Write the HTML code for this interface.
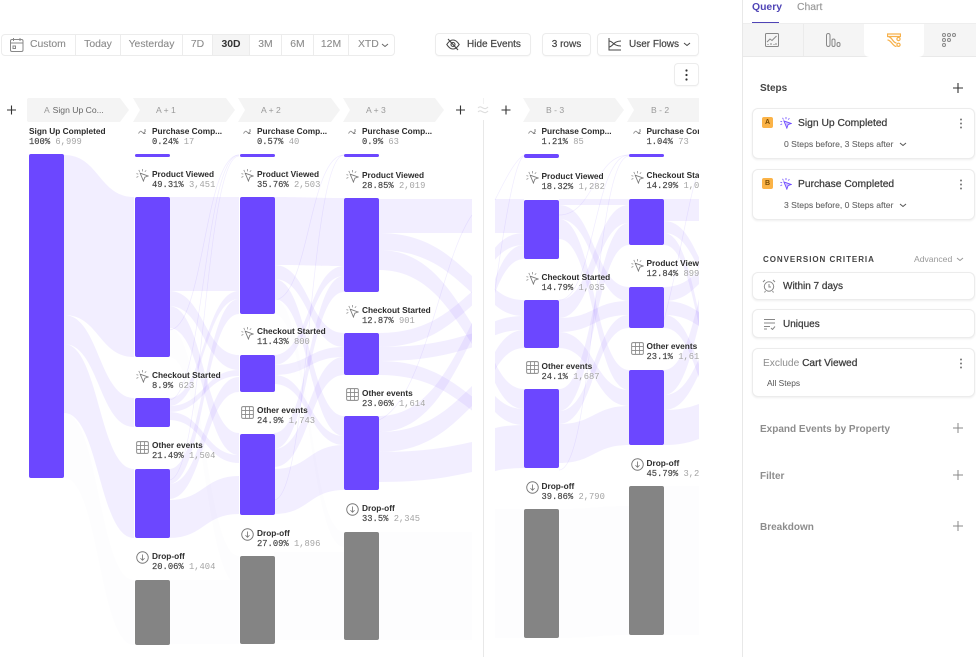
<!DOCTYPE html>
<html><head><meta charset="utf-8"><style>
html,body{margin:0;padding:0;background:#fff}
body{width:976px;height:657px;position:relative;overflow:hidden;font-family:"Liberation Sans",sans-serif;color:#333}
.a{position:absolute}
#wrap{position:absolute;left:0;top:0;width:976px;height:657px;filter:blur(.35px)}
.seg{position:absolute;top:34px;height:22px;line-height:21px;text-align:center;font-size:10.400px;color:#8b8b8b;border-right:1px solid #ececec;box-sizing:border-box;-webkit-text-stroke:.1px #8b8b8b}
.btn{position:absolute;border:1px solid #ececec;border-radius:4px;box-sizing:border-box;background:#fff;font-size:10px;color:#444;line-height:21px;box-shadow:0 1px 1px rgba(0,0,0,.03);-webkit-text-stroke:.2px #444}
.bar{position:absolute;width:35px;background:#6c47ff;border-radius:2px}
.g{background:#848484}
.ln{position:absolute;width:35px;height:3px;background:#6c47ff;border-radius:2px;top:154px}
.l{position:absolute;white-space:nowrap;width:140px;height:24px;text-shadow:0 0 2px #fff}
.l b{display:block;font-size:8.300px;line-height:12px;color:#2c2c2c}
.l span{display:block;font-family:"Liberation Mono",monospace;font-size:8.800px;line-height:11px;color:#444;-webkit-text-stroke:.15px #444}
.l i{font-style:normal;color:#a4a4a4;-webkit-text-stroke:0}
.hd{position:absolute;top:98px;height:24px;line-height:24px;font-size:8.600px;color:#999}
.card{position:absolute;left:752px;width:223px;box-sizing:border-box;border:1px solid #ececec;border-radius:6px;background:#fff;box-shadow:0 1px 2px rgba(0,0,0,.07)}
.t{position:absolute;white-space:nowrap}
.m{-webkit-text-stroke:.25px #3c3c3c;color:#3c3c3c!important}
.bd{position:absolute;left:762px;width:11px;height:11px;background:#fbb347;border-radius:2px;font-size:7px;font-weight:bold;line-height:11px;text-align:center;color:#7a4b00}
.sub{font-size:8.600px;color:#666;left:784px;-webkit-text-stroke:.1px #666}
.sec{left:760px;font-size:10px;font-weight:bold;color:#8d8d8d}
</style></head><body>
<div id="wrap">
<svg width="0" height="0" style="position:absolute"><defs>
<symbol id="sp" viewBox="0 0 14 14"><path d="M3 1l1 2M7 0v2.500M.5 5l2 .6M.5 9l2-1M11 1.500l-1.500 1.500" stroke="#888" stroke-width=".8" fill="none"/><path d="M4.500 4.500l8.500 3-3.500 1.300L8 13z" stroke="#777" stroke-width=".9" fill="#fff"/></symbol>
<symbol id="sv" viewBox="0 0 14 14"><path d="M3 1l1 2M7 0v2.500M.5 5l2 .6M.5 9l2-1M11 1.500l-1.500 1.500" stroke="#7a5cff" stroke-width="1" fill="none"/><path d="M4.500 4.500l8.500 3-3.500 1.300L8 13z" stroke="#6c47ff" stroke-width="1" fill="#cfc4ff"/></symbol>
<symbol id="gr" viewBox="0 0 14 14"><rect x=".7" y=".7" width="12.600" height="12.600" rx="1.500" fill="#fff" stroke="#888" stroke-width="1"/><path d="M.7 4.900h12.600M.7 9.100h12.600M4.900.7v12.600M9.100.7v12.600" stroke="#888" stroke-width=".9"/></symbol>
<symbol id="dr" viewBox="0 0 14 14"><circle cx="7" cy="7" r="6.200" fill="#fff" stroke="#777" stroke-width="1"/><path d="M7 3.800v6M4.800 7.800L7 10l2.200-2.200" fill="none" stroke="#777" stroke-width=".9"/></symbol>
<symbol id="pu" viewBox="0 0 8 6"><path d="M.5 4.500C2 2 3 1.500 4 3s2 1.500 3.500-1M6 1h2M5 4.500h2.500" fill="none" stroke="#888" stroke-width=".9"/></symbol>
</defs></svg>

<!-- flows -->
<svg class="a" style="left:0;top:0" width="699" height="657" fill="none">
<defs><clipPath id="c1"><rect x="379" y="0" width="93" height="657"/></clipPath><clipPath id="c2"><rect x="495" y="0" width="29" height="657"/></clipPath></defs>
<g fill="#fdfdfe">
<path d="M64 413C99 413 99 580 134 580V645C99 645 99 478 64 478Z"/>
<rect x="169" y="580" width="70" height="64"/>
<path d="M169 328C204 328 204 556 239 556V585C204 585 204 357 169 357Z"/>
<path d="M274 552H344V640H274Z"/>
<path d="M274 299C309 299 309 532 344 532V547C309 547 309 314 274 314Z"/>
<rect x="379" y="532" width="93" height="108"/>
<rect x="495" y="509" width="29" height="129"/>
<path d="M559 509C594 509 594 506 629 506V635C594 635 594 638 559 638Z"/>
<rect x="664" y="486" width="35" height="149"/>
</g>
<g fill="#6c47ff" fill-opacity=".09">
<path d="M64 155C99 155 99 197 134 197V357C99 357 99 315 64 315Z"/>
<path d="M64 315C99 315 99 398 134 398V427C99 427 99 344 64 344Z"/>
<path d="M64 344C99 344 99 469 134 469V538C99 538 99 413 64 413Z"/>

<rect x="169" y="197" width="70" height="94"/>
<path d="M169 291C204 291 204 355 239 355V370C204 370 204 306 169 306Z"/>
<path d="M169 306C204 306 204 433 239 433V455C204 455 204 328 169 328Z"/>
<path d="M169 398C204 398 204 291 239 291V299C204 299 204 406 169 406Z"/>
<path d="M169 406C204 406 204 370 239 370V376C204 376 204 412 169 412Z"/>
<path d="M169 412C204 412 204 455 239 455V463C204 463 204 420 169 420Z"/>
<path d="M169 469C204 469 204 299 239 299V314C204 314 204 484 169 484Z"/>
<path d="M169 484C204 484 204 377 239 377V392C204 392 204 499 169 499Z"/>
<path d="M169 500C204 500 204 476 239 476V514C204 514 204 538 169 538Z"/>

<path d="M274 197C309 197 309 198 344 198V266C309 266 309 265 274 265Z"/>
<path d="M274 265C309 265 309 333 344 333V347C309 347 309 279 274 279Z"/>
<path d="M274 279C309 279 309 416 344 416V436C309 436 309 299 274 299Z"/>
<path d="M274 355C309 355 309 266 344 266V276C309 276 309 365 274 365Z"/>
<path d="M274 365C309 365 309 347 344 347V357C309 357 309 375 274 375Z"/>
<path d="M274 375C309 375 309 436 344 436V445C309 445 309 384 274 384Z"/>
<path d="M274 433C309 433 309 276 344 276V292C309 292 309 449 274 449Z"/>
<path d="M274 449C309 449 309 357 344 357V375C309 375 309 467 274 467Z"/>
<path d="M274 469C309 469 309 445 344 445V490C309 490 309 514 274 514Z"/>

<g clip-path="url(#c1)">
<rect x="379" y="199" width="93" height="34"/>
<path d="M379 233C472 233 472 319 565 319V336C472 336 472 250 379 250Z"/>
<path d="M379 250C472 250 472 398 565 398V418C472 418 472 270 379 270Z"/>
<path d="M379 333C472 333 472 250 565 250V264C472 264 472 347 379 347Z"/>
<path d="M379 347C472 347 472 320 565 320V334C472 334 472 361 379 361Z"/>
<path d="M379 361C472 361 472 432 565 432V446C472 446 472 375 379 375Z"/>
<path d="M379 416C472 416 472 230 565 230V246C472 246 472 432 379 432Z"/>
<path d="M379 432C472 432 472 340 565 340V360C472 360 472 452 379 452Z"/>
<path d="M379 452C472 452 472 432 565 432V462C472 462 472 482 379 482Z"/>
</g>
<g clip-path="url(#c2)">
<rect x="495" y="199" width="29" height="34"/>
<path d="M440 300C482 300 482 233 524 233V245C482 245 482 312 440 312Z"/>
<path d="M440 400C482 400 482 245 524 245V259C482 259 482 414 440 414Z"/>
<path d="M440 250C482 250 482 300 524 300V316C482 316 482 266 440 266Z"/>
<path d="M440 340C482 340 482 316 524 316V330C482 330 482 354 440 354Z"/>
<path d="M440 430C482 430 482 330 524 330V348C482 348 482 448 440 448Z"/>
<path d="M440 270C482 270 482 389 524 389V409C482 409 482 290 440 290Z"/>
<path d="M440 350C482 350 482 409 524 409V425C482 425 482 366 440 366Z"/>
<path d="M440 439C482 439 482 425 524 425V468C482 468 482 482 440 482Z"/>
</g>

<rect x="559" y="199" width="70" height="6"/>
<path d="M559 205C594 205 594 287 629 287V301C594 301 594 219 559 219Z"/>
<path d="M559 219C594 219 594 370 629 370V390C594 390 594 239 559 239Z"/>
<path d="M559 300C594 300 594 205 629 205V223C594 223 594 318 559 318Z"/>
<path d="M559 318C594 318 594 301 629 301V315C594 315 594 332 559 332Z"/>
<path d="M559 332C594 332 594 390 629 390V406C594 406 594 348 559 348Z"/>
<path d="M559 389C594 389 594 223 629 223V245C594 245 594 411 559 411Z"/>
<path d="M559 411C594 411 594 315 629 315V328C594 328 594 424 559 424Z"/>
<path d="M559 424C594 424 594 406 629 406V445C594 445 594 463 559 463Z"/>

<rect x="664" y="199" width="35" height="22"/>
<path d="M664 221C699 221 699 294 734 294V306C699 306 699 233 664 233Z"/>
<path d="M664 233C699 233 699 394 734 394V406C699 406 699 245 664 245Z"/>
<path d="M664 287C699 287 699 253 734 253V267C699 267 699 301 664 301Z"/>
<path d="M664 301C699 301 699 323 734 323V337C699 337 699 315 664 315Z"/>
<path d="M664 315C699 315 699 414 734 414V427C699 427 699 328 664 328Z"/>
<path d="M664 370C699 370 699 228 734 228V253C699 253 699 395 664 395Z"/>
<path d="M664 395C699 395 699 323 734 323V338C699 338 699 410 664 410Z"/>
<path d="M664 410C699 410 699 398 734 398V433C699 433 699 445 664 445Z"/>
</g>
<g stroke="#6c47ff" stroke-opacity=".1" stroke-width=".7">
<path d="M169 400C204 400 204 155 239 155"/><path d="M169 330C204 330 204 155 239 155"/><path d="M169 480C204 480 204 156 239 156"/>
<path d="M274 500C309 500 309 155 344 155"/><path d="M274 300C309 300 309 155 344 155"/>
<path d="M379 420C425 400 440 260 472 215"/>
<path d="M495 200C505 180 515 160 524 155"/><path d="M495 290C505 220 515 160 524 156"/>
<path d="M559 300C594 300 594 155 629 155"/><path d="M559 215C594 215 594 155 629 155"/><path d="M559 470C594 470 594 156 629 156"/>
<path d="M664 320C680 260 690 190 699 170"/>
</g>
</svg>

<!-- toolbar -->
<div class="a" style="left:1px;top:34px;width:394px;height:22px;border:1px solid #ececec;border-radius:4px;box-sizing:border-box"></div>
<div class="a" style="left:212px;top:35px;width:38px;height:20px;background:#f5f5f5"></div>
<div class="seg" style="left:1px;width:75px;text-align:left;padding-left:29px">Custom</div>
<svg class="a" style="left:10px;top:38px" width="14" height="14" fill="none" stroke="#888" stroke-width="1"><rect x=".5" y="1.500" width="12.500" height="12" rx="1.500"/><path d="M.5 5h12.500M3.500 0v3M10 0v3"/><rect x="3" y="8" width="2.500" height="2.500"/></svg>
<div class="seg" style="left:76px;width:45px">Today</div>
<div class="seg" style="left:121px;width:62px">Yesterday</div>
<div class="seg" style="left:183px;width:30px">7D</div>
<div class="seg" style="left:213px;width:37px;color:#333;font-weight:bold;-webkit-text-stroke:0">30D</div>
<div class="seg" style="left:250px;width:32px">3M</div>
<div class="seg" style="left:282px;width:32px">6M</div>
<div class="seg" style="left:314px;width:35px">12M</div>
<div class="seg" style="left:349px;width:46px;border:0;text-align:left;padding-left:9px">XTD</div>
<svg class="a" style="left:381px;top:43px" width="8" height="5" fill="none" stroke="#666"><path d="M1 1l3 2.500L7 1"/></svg>

<div class="btn" style="left:435px;top:33px;width:96px;height:23px;padding-left:31px">Hide Events</div>
<svg class="a" style="left:446px;top:38px" width="14" height="13" fill="none" stroke="#444" stroke-width="1.100"><path d="M.8 6.500C3 3 5 2 7 2s4 1 6.200 4.500C11 10 9 11 7 11S3 10 .8 6.500z"/><circle cx="7" cy="6.500" r="2"/><path d="M2 1l10 11"/></svg>
<div class="btn" style="left:542px;top:33px;width:49px;height:23px;text-align:center">3 rows</div>
<div class="btn" style="left:597px;top:33px;width:102px;height:23px;padding-left:31px">User Flows</div>
<svg class="a" style="left:608px;top:38px" width="14" height="13" fill="none" stroke="#444"><path d="M1 0v12h12M1 3c4 0 4 5 12 5M1 9c4 0 4-6 12-6"/></svg>
<svg class="a" style="left:683px;top:42px" width="8" height="5" fill="none" stroke="#444"><path d="M1 1l3 2.500L7 1"/></svg>
<div class="btn" style="left:674px;top:63px;width:25px;height:23px"></div>
<svg class="a" style="left:684px;top:69px" width="5" height="12" fill="#333"><circle cx="2.500" cy="1.500" r="1.100"/><circle cx="2.500" cy="6" r="1.100"/><circle cx="2.500" cy="10.500" r="1.100"/></svg>

<!-- header chevrons -->
<svg class="a" style="left:0;top:98px" width="699" height="24" fill="#f4f4f4">
<path d="M29 0H120L129 12 120 24H29a2 2 0 0 1-2-2V2a2 2 0 0 1 2-2z"/>
<path d="M133 0H226L235 12 226 24H133L140 12z"/>
<path d="M238 0H331L340 12 331 24H238L245 12z"/>
<path d="M343 0H435L444 12 435 24H343L350 12z"/>
<path d="M523 0H615L624 12 615 24H523L530 12z"/>
<path d="M627 0H699V24H627L634 12z"/>
</svg>
<div class="hd" style="left:44px"><span style="color:#999">A</span> <span style="color:#666;margin-left:1px">Sign Up Co...</span></div>
<div class="hd" style="left:156px">A + 1</div>
<div class="hd" style="left:261px">A + 2</div>
<div class="hd" style="left:366px">A + 3</div>
<div class="hd" style="left:546px">B - 3</div>
<div class="hd" style="left:651px">B - 2</div>
<svg class="a" style="left:0;top:0" width="520" height="130" stroke="#333" stroke-width="1.100" fill="none"><path d="M7 110h9M11.500 105.500v9M456 110h9M460.500 105.500v9M501.500 110h9M506 105.500v9"/><path d="M478 108c2-2 3-1 5 0s3 1 5-1M478 112c2-2 3-1 5 0s3 1 5-1" stroke="#ddd"/></svg>
<div class="a" style="left:483px;top:120px;width:1px;height:537px;background:#e8e8e8"></div>
<div class="a" style="left:483px;top:98px;width:1px;height:6px;background:#f2f2f2"></div>

<!-- bars -->
<div class="bar" style="left:29px;top:154px;height:324px"></div>
<div class="ln" style="left:134.500px"></div>
<div class="bar" style="left:134.500px;top:197px;height:160px"></div>
<div class="bar" style="left:134.500px;top:398px;height:29px"></div>
<div class="bar" style="left:134.500px;top:469px;height:69px"></div>
<div class="bar g" style="left:134.500px;top:580px;height:64.500px"></div>
<div class="ln" style="left:239.500px"></div>
<div class="bar" style="left:239.500px;top:197px;height:117px"></div>
<div class="bar" style="left:239.500px;top:355px;height:37px"></div>
<div class="bar" style="left:239.500px;top:433.500px;height:81px"></div>
<div class="bar g" style="left:239.500px;top:556px;height:87.500px"></div>
<div class="ln" style="left:344px"></div>
<div class="bar" style="left:344px;top:198px;height:94px"></div>
<div class="bar" style="left:344px;top:333px;height:42px"></div>
<div class="bar" style="left:344px;top:416px;height:74px"></div>
<div class="bar g" style="left:344px;top:532px;height:108px"></div>
<div class="ln" style="left:524px;height:4px"></div>
<div class="bar" style="left:524px;top:199.500px;height:59.500px"></div>
<div class="bar" style="left:524px;top:300px;height:48px"></div>
<div class="bar" style="left:524px;top:389px;height:79px"></div>
<div class="bar g" style="left:524px;top:509px;height:129px"></div>
<div class="ln" style="left:629px"></div>
<div class="bar" style="left:629px;top:199px;height:46px"></div>
<div class="bar" style="left:629px;top:287px;height:41px"></div>
<div class="bar" style="left:629px;top:370px;height:75px"></div>
<div class="bar g" style="left:629px;top:486px;height:149px"></div>

<!-- labels -->
<div class="a" style="left:0;top:0;width:699px;height:657px;overflow:hidden">
<div class="l" style="left:29px;top:125px"><b>Sign Up Completed</b><span>100% <i>6,999</i></span></div>

<svg class="a" style="left:138px;top:129px" width="8" height="6"><use href="#pu"/></svg>
<div class="l" style="left:152px;top:125px"><b>Purchase Comp...</b><span>0.24% <i>17</i></span></div>
<svg class="a" style="left:136px;top:169px" width="13" height="13"><use href="#sp"/></svg>
<div class="l" style="left:152px;top:168px"><b>Product Viewed</b><span>49.31% <i>3,451</i></span></div>
<svg class="a" style="left:136px;top:370px" width="13" height="13"><use href="#sp"/></svg>
<div class="l" style="left:152px;top:369px"><b>Checkout Started</b><span>8.9% <i>623</i></span></div>
<svg class="a" style="left:136px;top:441px" width="13" height="13"><use href="#gr"/></svg>
<div class="l" style="left:152px;top:439px"><b>Other events</b><span>21.49% <i>1,504</i></span></div>
<svg class="a" style="left:136px;top:551px" width="13" height="13"><use href="#dr"/></svg>
<div class="l" style="left:152px;top:550px"><b>Drop-off</b><span>20.06% <i>1,404</i></span></div>

<svg class="a" style="left:243px;top:129px" width="8" height="6"><use href="#pu"/></svg>
<div class="l" style="left:257px;top:125px"><b>Purchase Comp...</b><span>0.57% <i>40</i></span></div>
<svg class="a" style="left:241px;top:169px" width="13" height="13"><use href="#sp"/></svg>
<div class="l" style="left:257px;top:168px"><b>Product Viewed</b><span>35.76% <i>2,503</i></span></div>
<svg class="a" style="left:241px;top:327px" width="13" height="13"><use href="#sp"/></svg>
<div class="l" style="left:257px;top:325px"><b>Checkout Started</b><span>11.43% <i>800</i></span></div>
<svg class="a" style="left:241px;top:406px" width="13" height="13"><use href="#gr"/></svg>
<div class="l" style="left:257px;top:404px"><b>Other events</b><span>24.9% <i>1,743</i></span></div>
<svg class="a" style="left:241px;top:528px" width="13" height="13"><use href="#dr"/></svg>
<div class="l" style="left:257px;top:526.500px"><b>Drop-off</b><span>27.09% <i>1,896</i></span></div>

<svg class="a" style="left:348px;top:129px" width="8" height="6"><use href="#pu"/></svg>
<div class="l" style="left:362px;top:125px"><b>Purchase Comp...</b><span>0.9% <i>63</i></span></div>
<svg class="a" style="left:346px;top:170px" width="13" height="13"><use href="#sp"/></svg>
<div class="l" style="left:362px;top:168.500px"><b>Product Viewed</b><span>28.85% <i>2,019</i></span></div>
<svg class="a" style="left:346px;top:305px" width="13" height="13"><use href="#sp"/></svg>
<div class="l" style="left:362px;top:303.500px"><b>Checkout Started</b><span>12.87% <i>901</i></span></div>
<svg class="a" style="left:346px;top:388px" width="13" height="13"><use href="#gr"/></svg>
<div class="l" style="left:362px;top:386.500px"><b>Other events</b><span>23.06% <i>1,614</i></span></div>
<svg class="a" style="left:346px;top:503px" width="13" height="13"><use href="#dr"/></svg>
<div class="l" style="left:362px;top:502px"><b>Drop-off</b><span>33.5% <i>2,345</i></span></div>

<svg class="a" style="left:528px;top:129px" width="8" height="6"><use href="#pu"/></svg>
<div class="l" style="left:541.500px;top:125px"><b>Purchase Comp...</b><span>1.21% <i>85</i></span></div>
<svg class="a" style="left:526px;top:171px" width="13" height="13"><use href="#sp"/></svg>
<div class="l" style="left:541.500px;top:170px"><b>Product Viewed</b><span>18.32% <i>1,282</i></span></div>
<svg class="a" style="left:526px;top:272px" width="13" height="13"><use href="#sp"/></svg>
<div class="l" style="left:541.500px;top:270.500px"><b>Checkout Started</b><span>14.79% <i>1,035</i></span></div>
<svg class="a" style="left:526px;top:361px" width="13" height="13"><use href="#gr"/></svg>
<div class="l" style="left:541.500px;top:360px"><b>Other events</b><span>24.1% <i>1,687</i></span></div>
<svg class="a" style="left:526px;top:481px" width="13" height="13"><use href="#dr"/></svg>
<div class="l" style="left:541.500px;top:479.500px"><b>Drop-off</b><span>39.86% <i>2,790</i></span></div>

<svg class="a" style="left:633px;top:129px" width="8" height="6"><use href="#pu"/></svg>
<div class="l" style="left:646.500px;top:125px"><b>Purchase Comp...</b><span>1.04% <i>73</i></span></div>
<svg class="a" style="left:631px;top:171px" width="13" height="13"><use href="#sp"/></svg>
<div class="l" style="left:646.500px;top:169px"><b>Checkout Started</b><span>14.29% <i>1,021</i></span></div>
<svg class="a" style="left:631px;top:259px" width="13" height="13"><use href="#sp"/></svg>
<div class="l" style="left:646.500px;top:257px"><b>Product Viewed</b><span>12.84% <i>899</i></span></div>
<svg class="a" style="left:631px;top:342px" width="13" height="13"><use href="#gr"/></svg>
<div class="l" style="left:646.500px;top:340px"><b>Other events</b><span>23.1% <i>1,617</i></span></div>
<svg class="a" style="left:631px;top:458px" width="13" height="13"><use href="#dr"/></svg>
<div class="l" style="left:646.500px;top:457px"><b>Drop-off</b><span>45.79% <i>3,205</i></span></div>
</div>

<!-- right panel -->
<div class="a" style="left:742px;top:0;width:1px;height:657px;background:#e8e8e8"></div>
<div class="t" style="left:752px;top:1px;font-size:10.400px;font-weight:bold;color:#4f44b6;line-height:13px">Query</div>
<div class="t" style="left:797px;top:1px;font-size:10.400px;color:#999;line-height:13px;-webkit-text-stroke:.15px #999">Chart</div>
<div class="a" style="left:752px;top:22px;width:27px;height:1.500px;background:#4f44b6"></div>
<div class="a" style="left:743px;top:23px;width:233px;height:1px;background:#eee"></div>
<div class="a" style="left:743px;top:24px;width:233px;height:32px;background:#f5f5f5;border-bottom:1px solid #e9e9e9;box-sizing:content-box"></div>
<div class="a" style="left:803px;top:24px;width:1px;height:32px;background:#ebebeb"></div>
<div class="a" style="left:864px;top:24px;width:60px;height:33px;background:#fff;border-radius:0 0 5px 5px"></div>
<svg class="a" style="left:765px;top:33px" width="14" height="14" fill="none" stroke="#888" stroke-width="1"><rect x=".5" y=".5" width="13" height="13" rx="1"/><path d="M2 9l3-3 2 1.500L11.500 3"/><path d="M3 12v-1M6 12v-2M9 12v-1M11 12v-2"/></svg>
<svg class="a" style="left:826px;top:33px" width="15" height="15" fill="none" stroke="#888" stroke-width="1"><rect x=".5" y=".5" width="3.500" height="13" rx="1.700"/><rect x="6" y="6" width="3" height="7.500" rx="1.500"/><rect x="11" y="9.500" width="3" height="4" rx="1.500"/></svg>
<svg class="a" style="left:887px;top:33px" width="14" height="14" fill="none" stroke="#f6b04a" stroke-width="1.200"><path d="M.5 1h13v2.500H.5zM.5 3.500c5 0 5 6.500 9 6.500M.5 7c4 0 5 6.500 9 6.500"/><circle cx="11.500" cy="6" r="1.600"/><circle cx="11.500" cy="11.800" r="1.600"/></svg>
<svg class="a" style="left:942px;top:33px" width="14" height="14" fill="none" stroke="#888" stroke-width="1"><circle cx="2" cy="2" r="1.500"/><circle cx="7" cy="2" r="1.500"/><circle cx="12" cy="2" r="1.500"/><circle cx="2" cy="7" r="1.500"/><circle cx="7" cy="7" r="1.500"/><circle cx="2" cy="12" r="1.500"/></svg>

<div class="t" style="left:760px;top:82px;font-size:10px;font-weight:bold;color:#444;line-height:13px">Steps</div>
<svg class="a" style="left:953px;top:83px" width="10" height="10" stroke="#333" stroke-width="1.100"><path d="M0 5h10M5 0v10"/></svg>

<div class="card" style="top:108px;height:51px"></div>
<div class="bd" style="top:117px">A</div>
<svg class="a" style="left:780px;top:117px" width="12" height="12"><use href="#sv"/></svg>
<div class="t m" style="left:798px;top:117px;font-size:10.300px;line-height:14px">Sign Up Completed</div>
<div class="t sub" style="top:138px;line-height:12px">0 Steps before, 3 Steps after</div>
<svg class="a" style="left:899px;top:142px" width="8" height="5" fill="none" stroke="#555"><path d="M1 1l3 2.500L7 1"/></svg>
<svg class="a" style="left:959px;top:118px" width="4" height="11" fill="#777"><circle cx="2" cy="1.500" r="1"/><circle cx="2" cy="5.500" r="1"/><circle cx="2" cy="9.500" r="1"/></svg>

<div class="card" style="top:169px;height:51px"></div>
<div class="bd" style="top:178px">B</div>
<svg class="a" style="left:780px;top:178px" width="12" height="12"><use href="#sv"/></svg>
<div class="t m" style="left:798px;top:178px;font-size:10.300px;line-height:14px">Purchase Completed</div>
<div class="t sub" style="top:199px;line-height:12px">3 Steps before, 0 Steps after</div>
<svg class="a" style="left:899px;top:203px" width="8" height="5" fill="none" stroke="#555"><path d="M1 1l3 2.500L7 1"/></svg>
<svg class="a" style="left:959px;top:179px" width="4" height="11" fill="#777"><circle cx="2" cy="1.500" r="1"/><circle cx="2" cy="5.500" r="1"/><circle cx="2" cy="9.500" r="1"/></svg>

<div class="t" style="left:763px;top:254px;font-size:8px;font-weight:bold;letter-spacing:.95px;color:#444;line-height:11px">CONVERSION CRITERIA</div>
<div class="t" style="left:914px;top:254px;font-size:8.600px;color:#999;line-height:11px">Advanced</div>
<svg class="a" style="left:956px;top:257px" width="8" height="5" fill="none" stroke="#999"><path d="M1 1l3 2.500L7 1"/></svg>

<div class="card" style="top:272px;height:28px"></div>
<svg class="a" style="left:762px;top:279px" width="14" height="14" fill="none" stroke="#888"><circle cx="7" cy="7.500" r="4.700"/><path d="M7 5v3h2M1 3l2-2M13 3l-2-2M3.500 12l-1 1.500M10.500 12l1 1.500"/></svg>
<div class="t m" style="left:783px;top:280px;font-size:10px;line-height:13px">Within 7 days</div>

<div class="card" style="top:309px;height:29px"></div>
<svg class="a" style="left:763px;top:318px" width="13" height="12" fill="none" stroke="#888"><path d="M1 1.500h11M1 5h11M1 8.500h6M1 11h3M8 10l1.500 1.500L12 8.500"/></svg>
<div class="t m" style="left:783px;top:318px;font-size:10px;line-height:13px">Uniques</div>

<div class="card" style="top:348px;height:49px"></div>
<div class="t" style="left:763px;top:357px;font-size:10.200px;color:#8d8d8d;line-height:13px">Exclude <span class="m">Cart Viewed</span></div>
<div class="t" style="left:767px;top:378px;font-size:8.400px;color:#555;line-height:11px">All Steps</div>
<svg class="a" style="left:959px;top:358px" width="4" height="11" fill="#777"><circle cx="2" cy="1.500" r="1"/><circle cx="2" cy="5.500" r="1"/><circle cx="2" cy="9.500" r="1"/></svg>

<div class="t sec" style="top:423px;line-height:13px">Expand Events by Property</div>
<div class="t sec" style="top:470px;line-height:13px">Filter</div>
<div class="t sec" style="top:521px;line-height:13px">Breakdown</div>
<svg class="a" style="left:953px;top:423px" width="10" height="10" stroke="#888"><path d="M0 5h10M5 0v10"/></svg>
<svg class="a" style="left:953px;top:470px" width="10" height="10" stroke="#888"><path d="M0 5h10M5 0v10"/></svg>
<svg class="a" style="left:953px;top:521px" width="10" height="10" stroke="#888"><path d="M0 5h10M5 0v10"/></svg>
</div>
</body></html>
